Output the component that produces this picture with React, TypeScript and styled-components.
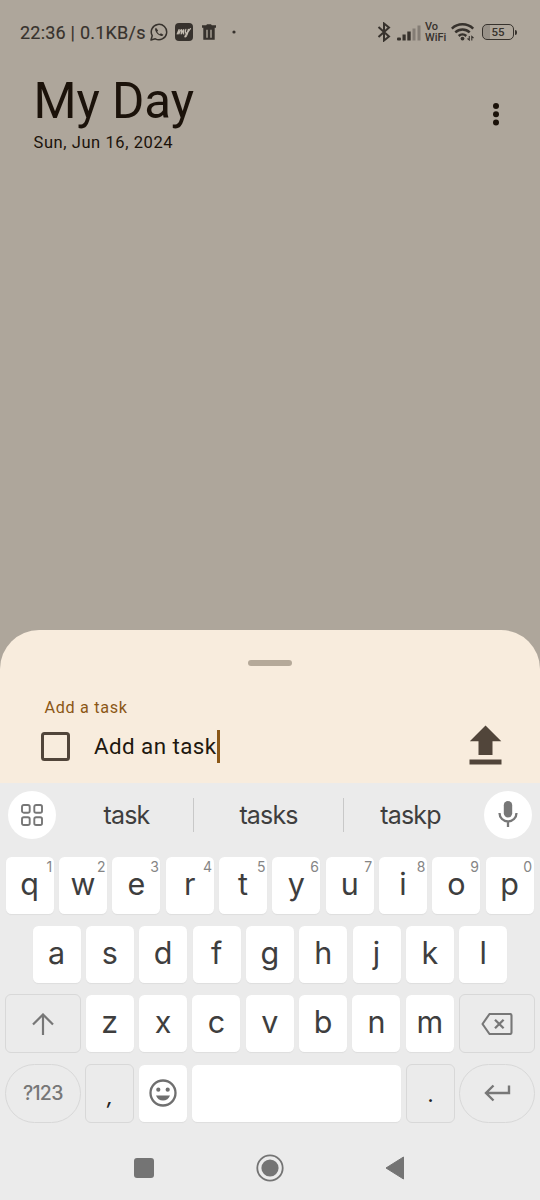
import React from "react";
import styled, { createGlobalStyle } from "styled-components";

const GlobalStyle = createGlobalStyle`
  *, *::before, *::after { box-sizing: border-box; }
  body { margin: 0; background: #aea69b; font-family: Roboto, sans-serif; }
  svg { display: block; flex: none; }
`;

const Screen = styled.div`
  width: 540px;
  height: 1200px;
  display: flex;
  flex-direction: column;
  overflow: hidden;
  background: #aea69b;
`;

const StatusBar = styled.div`
  height: 64px;
  flex: none;
  display: flex;
  align-items: center;
  justify-content: space-between;
  padding: 0 23px 0 20px;
  color: #37322d;
`;

const StatusGroup = styled.div`
  display: flex;
  align-items: center;
`;

const StatusText = styled.span`
  width: 130px;
  font-size: 18px;
  line-height: 24px;
  letter-spacing: 0.22px;
  white-space: nowrap;
  padding-top: 2px;
  -webkit-text-stroke: 0.15px currentColor;
`;

const VoWifi = styled.span`
  width: 26px;
  margin-left: 4px;
  padding-top: 1px;
  font-size: 11px;
  font-weight: 500;
  line-height: 10.5px;
  white-space: pre;
`;

const Header = styled.header`
  flex: none;
  display: flex;
  justify-content: space-between;
  align-items: flex-start;
  padding: 7px 36px 0 33.5px;
  color: #1b120a;
`;

const Title = styled.h1`
  margin: 0;
  font-size: 49.3px;
  font-weight: 400;
  line-height: 60px;
  letter-spacing: -0.05px;
`;

const DateText = styled.p`
  margin: 1.5px 0 0;
  font-size: 16.5px;
  line-height: 20px;
  letter-spacing: 0.58px;
`;

const MenuButton = styled.button`
  border: 0;
  padding: 0;
  margin-top: 30px;
  background: none;
  color: inherit;
`;

const Sheet = styled.section`
  flex: none;
  margin-top: auto;
  height: 153px;
  border-radius: 39px 39px 0 0;
  background: #f8ecdd;
  display: flex;
  flex-direction: column;
`;

const Handle = styled.div`
  width: 44px;
  height: 6px;
  margin: 30px auto 0;
  border-radius: 3px;
  background: #b5a999;
`;

const FieldLabel = styled.label`
  margin: 32px 0 0 44.5px;
  font-size: 16.2px;
  line-height: 20px;
  letter-spacing: 0.68px;
  color: #8b5716;
`;

const TaskRow = styled.div`
  display: flex;
  align-items: center;
  height: 40px;
  margin-top: 8px;
  padding: 0 38.5px 0 41px;
`;

const Checkbox = styled.span`
  width: 29px;
  height: 29px;
  border: 3px solid #51453a;
  border-radius: 3.5px;
`;

const TaskInput = styled.span`
  flex: 1;
  display: flex;
  align-items: center;
  margin-left: 24px;
  font-size: 22.4px;
  letter-spacing: 0.42px;
  color: #21180f;
  white-space: nowrap;
`;

const Caret = styled.span`
  width: 3px;
  height: 33px;
  background: #8b5716;
`;

const UploadSlot = styled.span`
  padding-bottom: 2px;
`;

const Keyboard = styled.section`
  flex: none;
  height: 417px;
  display: flex;
  flex-direction: column;
  background: #ebebeb;
  color: #3e3e3e;
  font-family: Inter, sans-serif;
`;

const Suggestions = styled.div`
  height: 63px;
  display: flex;
  align-items: center;
  padding: 0 8px;
`;

const RoundButton = styled.span`
  width: 48px;
  height: 48px;
  flex: none;
  border-radius: 50%;
  background: #fff;
  color: #777;
  display: grid;
  place-items: center;
`;

const Words = styled.div`
  flex: 1;
  display: grid;
  grid-template-columns: 138px 150px 1fr;
`;

const Word = styled.span<{ $divided?: boolean; $start?: number; $end?: number }>`
  height: 34px;
  line-height: 34px;
  padding-left: ${(p) => p.$start ?? 0}px;
  padding-right: ${(p) => p.$end ?? 0}px;
  text-align: center;
  font-size: 25px;
  letter-spacing: -0.85px;
  border-right: ${(p) => (p.$divided ? "1px solid #c8c8c8" : "0")};
`;

const Keys = styled.div`
  display: flex;
  flex-direction: column;
  gap: 11.3px;
  padding-top: 10.3px;
`;

const KeyRow = styled.div<{ $inset?: number }>`
  height: 58px;
  display: flex;
  align-items: center;
  gap: 5.35px;
  padding: 0 ${(p) => p.$inset ?? 5.6}px;
`;

const Key = styled.span<{ $grow?: boolean }>`
  width: 48px;
  height: 57px;
  flex: ${(p) => (p.$grow ? "1" : "none")};
  border-radius: 5.5px;
  background: #fff;
  box-shadow: 0 1px 1px #dedede;
  display: grid;
  grid-template: 100% / 100%;
  color: #3e3e3e;
`;

const Letter = styled.span`
  grid-area: 1 / 1;
  text-align: center;
  font-size: 30.5px;
  line-height: 53px;
`;

const Hint = styled.span`
  grid-area: 1 / 1;
  justify-self: end;
  padding: 1px 1.5px 0 0;
  font-size: 14px;
  line-height: 17px;
  color: #858585;
`;

const EmojiSlot = styled.span`
  display: grid;
  place-items: center;
  color: #6f6f6f;
`;

const ActionKey = styled.span<{ $wide?: boolean; $pill?: boolean }>`
  width: ${(p) => (p.$wide ? 76 : 49)}px;
  height: 59px;
  flex: none;
  margin: 0 ${(p) => (p.$wide ? -0.4 : -0.5)}px;
  border: 1px solid #d8d8d8;
  border-radius: ${(p) => (p.$pill ? 30 : 6)}px;
  display: flex;
  align-items: center;
  justify-content: center;
  color: #777;
  font-size: 19.5px;
  font-weight: 500;
  letter-spacing: -0.7px;
`;

const Punctuation = styled.span<{ $slanted?: boolean }>`
  color: #222;
  font-size: 20px;
  font-style: ${(p) => (p.$slanted ? "italic" : "normal")};
  padding-top: ${(p) => (p.$slanted ? 7 : 3)}px;
`;

const NavBar = styled.nav`
  display: flex;
  justify-content: space-between;
  align-items: center;
  margin-top: auto;
  height: 65px;
  padding: 0 135px 0 133px;
  color: #747474;
`;

const WhatsAppIcon = () => (
  <svg width="18" height="18" viewBox="0 0 18 18" fill="none" stroke="currentColor" strokeWidth="1.5">
    <path d="M1 17l1.2-4.3A7.7 7.7 0 1 1 5.3 15.8Z" strokeLinejoin="round" />
    <path d="M6 4.800c-1 .6-1.100 1.700-.6 2.900 1 2.400 3 4.300 5.300 5.100 1.200.4 2.300.1 2.700-1l-2.500-1.600-1.100 1c-1.200-.5-2-1.400-2.600-2.500l.9-1.100Z" fill="currentColor" stroke="none" />
  </svg>
);

const MyAppIcon = () => (
  <svg width="18" height="18" viewBox="0 0 18 18">
    <rect width="18" height="18" rx="4" fill="currentColor" />
    <path d="M2.200 11 4.200 6.200l-.5 5C4.700 9 5.700 6.500 6.400 6.500s-.6 4.500-.1 4.500 1.600-4.300 2.300-4.300-.8 4.200.2 4.200M10.800 6.300c-.7 2.600-.6 3.900.2 3.900s1.900-1.900 2.500-4.200c-.6 3.700-1.900 8-3.200 8-1.500 0 1.400-3.300 5.200-8.300" fill="none" stroke="#c4bcb1" strokeWidth="1.200" strokeLinecap="round" />
  </svg>
);

const TrashIcon = () => (
  <svg width="14" height="17" viewBox="0 0 14 17">
    <path fill="currentColor" fillRule="evenodd" d="M4.200 1.300 5 .3h4l.8 1H14V3.800h-1.300v12H1.300v-12H0V1.300ZM4.300 5.800v8h1.400v-8Zm4 0v8h1.400v-8Z" />
  </svg>
);

const BluetoothIcon = () => (
  <svg width="14" height="20" viewBox="0 0 14 20" fill="none" stroke="currentColor" strokeWidth="2">
    <path d="M1.500 5 12 14.500 7 18.500v-17L12 5.500 1.500 15" />
  </svg>
);

const SignalIcon = () => (
  <svg width="24" height="16" viewBox="0 0 24 16" fill="currentColor">
    <rect y="12.500" width="4" height="3" rx="1" />
    <rect x="5.500" y="9.500" width="3.200" height="6" />
    <rect x="10.300" y="6.500" width="3.400" height="9" />
    <rect x="15.500" y="3.500" width="3" height="12" opacity=".35" />
    <rect x="20.500" y=".5" width="3" height="15" opacity=".35" />
  </svg>
);

const WifiIcon = () => (
  <svg width="24" height="18" viewBox="0 0 24 18" fill="none" stroke="currentColor" strokeWidth="2.500">
    <path d="M.8 5.600a15.500 15.500 0 0 1 21.400 0M4.300 9.400a10.500 10.500 0 0 1 14.400 0M7.700 13a5.600 5.600 0 0 1 7.600 0" />
    <circle cx="11.500" cy="15.600" r="1.900" fill="currentColor" stroke="none" />
    <path d="M18.300 13v4l-1.800-1.500M20.800 17.500v-4l1.700 1.500" strokeWidth="1.100" />
  </svg>
);

const BatteryWrap = styled.span`
  display: flex;
  align-items: center;
  margin-left: 7px;
`;

const BatteryBody = styled.span`
  width: 32px;
  height: 16px;
  border: 1.5px solid currentColor;
  border-radius: 5px;
  background: linear-gradient(90deg, #989188 0 7px, transparent 7px);
  font-size: 11.5px;
  font-weight: 500;
  line-height: 14.5px;
  text-align: center;
`;

const BatteryTip = styled.span`
  width: 2px;
  height: 5px;
  margin-left: 1px;
  border-radius: 0 2px 2px 0;
  background: currentColor;
`;

const IconSlot = styled.span<{ $left: number; $top?: number }>`
  margin-left: ${(p) => p.$left}px;
  padding-top: ${(p) => p.$top ?? 0}px;
`;

const topRow = "qwertyuiop".split("");
const middleRow = "asdfghjkl".split("");
const bottomRow = "zxcvbnm".split("");

export default function App() {
  return (
    <>
      <GlobalStyle />
      <Screen>
        <StatusBar>
          <StatusGroup>
            <StatusText>22:36 | 0.1KB/s</StatusText>
            <WhatsAppIcon />
            <IconSlot $left={7}><MyAppIcon /></IconSlot>
            <IconSlot $left={8.5}><TrashIcon /></IconSlot>
            <IconSlot $left={16}>
              <svg width="4" height="4" viewBox="0 0 4 4"><circle cx="2" cy="2" r="1.600" fill="currentColor" /></svg>
            </IconSlot>
          </StatusGroup>
          <StatusGroup>
            <BluetoothIcon />
            <IconSlot $left={6} $top={1}><SignalIcon /></IconSlot>
            <VoWifi>{"Vo\nWiFi"}</VoWifi>
            <WifiIcon />
            <BatteryWrap>
              <BatteryBody>55</BatteryBody>
              <BatteryTip />
            </BatteryWrap>
          </StatusGroup>
        </StatusBar>

        <Header>
          <div>
            <Title>My Day</Title>
            <DateText>Sun, Jun 16, 2024</DateText>
          </div>
          <MenuButton aria-label="More options">
            <svg width="16" height="26" viewBox="0 0 16 26" fill="currentColor">
              <circle cx="8" cy="5" r="3" />
              <circle cx="8" cy="13.300" r="3" />
              <circle cx="8" cy="21.600" r="3" />
            </svg>
          </MenuButton>
        </Header>

        <Sheet>
          <Handle />
          <FieldLabel>Add a task</FieldLabel>
          <TaskRow>
            <Checkbox />
            <TaskInput>Add an task<Caret /></TaskInput>
            <UploadSlot>
              <svg width="33" height="40" viewBox="0 0 33 40" fill="#51453a">
                <path d="M16.500 .5 32.300 16.300H23.500V30H9.500V16.300H.8ZM.5 34.500h32v5H.5Z" />
              </svg>
            </UploadSlot>
          </TaskRow>
        </Sheet>

        <Keyboard>
          <Suggestions>
            <RoundButton>
              <svg width="22" height="22" viewBox="0 0 22 22" fill="none" stroke="currentColor" strokeWidth="1.900">
                <rect x="1" y="1" width="7.700" height="7.700" rx="1.800" />
                <rect x="13.300" y="1" width="7.700" height="7.700" rx="1.800" />
                <rect x="1" y="13.300" width="7.700" height="7.700" rx="1.800" />
                <rect x="13.300" y="13.300" width="7.700" height="7.700" rx="1.800" />
              </svg>
            </RoundButton>
            <Words>
              <Word $divided $start={4}>task</Word>
              <Word $divided>tasks</Word>
              <Word $end={7}>taskp</Word>
            </Words>
            <RoundButton>
              <svg width="20" height="28" viewBox="0 0 20 28">
                <rect x="5.800" y="0" width="8.400" height="16.500" rx="4.200" fill="currentColor" />
                <path d="M1.500 12a8.500 8.500 0 0 0 17 0M10 20.500V26" fill="none" stroke="currentColor" strokeWidth="2.300" />
              </svg>
            </RoundButton>
          </Suggestions>

          <Keys>
            <KeyRow>
              {topRow.map((letter, i) => (
                <Key key={letter}>
                  <Letter>{letter}</Letter>
                  <Hint>{(i + 1) % 10}</Hint>
                </Key>
              ))}
            </KeyRow>
            <KeyRow $inset={32.5}>
              {middleRow.map((letter) => (
                <Key key={letter}><Letter>{letter}</Letter></Key>
              ))}
            </KeyRow>
            <KeyRow $inset={5.2}>
              <ActionKey $wide>
                <svg width="22" height="22" viewBox="0 0 22 22" fill="none" stroke="currentColor" strokeWidth="2.200">
                  <path d="M11 22V1.800M1 11.500l10-10 10 10" />
                </svg>
              </ActionKey>
              {bottomRow.map((letter) => (
                <Key key={letter}><Letter>{letter}</Letter></Key>
              ))}
              <ActionKey $wide>
                <svg width="32" height="22" viewBox="0 0 32 22" fill="none" stroke="currentColor" strokeWidth="2.100">
                  <path d="M8.500 1H29a1.500 1.500 0 0 1 1.500 1.500v17A1.500 1.500 0 0 1 29 21H8.500L1.500 11Z" strokeLinejoin="round" />
                  <path d="m14 6.700 8.600 8.600m0-8.600L14 15.300" strokeWidth="2.300" />
                </svg>
              </ActionKey>
            </KeyRow>
            <KeyRow $inset={5.2}>
              <ActionKey $wide $pill>?123</ActionKey>
              <ActionKey><Punctuation $slanted>,</Punctuation></ActionKey>
              <Key>
                <EmojiSlot>
                  <svg width="28" height="28" viewBox="0 0 28 28">
                    <circle cx="14" cy="14" r="12.500" fill="none" stroke="currentColor" strokeWidth="2.300" />
                    <circle cx="9.300" cy="10.700" r="2.100" fill="currentColor" />
                    <circle cx="18.700" cy="10.700" r="2.100" fill="currentColor" />
                    <path d="M7 16.500h14c-1 3-3.700 5-7 5s-6-2-7-5Z" fill="currentColor" />
                  </svg>
                </EmojiSlot>
              </Key>
              <Key $grow />
              <ActionKey><Punctuation>.</Punctuation></ActionKey>
              <ActionKey $wide $pill>
                <svg width="27" height="18" viewBox="0 0 27 18" fill="none" stroke="currentColor" strokeWidth="2.400">
                  <path d="M25 1.500V9H2M9.500 1.500 2 9l7.500 7.500" />
                </svg>
              </ActionKey>
            </KeyRow>
          </Keys>

          <NavBar>
            <svg width="22" height="22" viewBox="0 0 22 22"><rect x="1" y="1" width="20" height="20" rx="3" fill="currentColor" /></svg>
            <svg width="28" height="28" viewBox="0 0 28 28">
              <circle cx="14" cy="14" r="12.700" fill="none" stroke="currentColor" strokeWidth="1.800" />
              <circle cx="14" cy="14" r="8.600" fill="currentColor" />
            </svg>
            <svg width="20" height="24" viewBox="0 0 20 24"><path d="M1 12 18.500 1v22Z" fill="currentColor" stroke="currentColor" strokeLinejoin="round" /></svg>
          </NavBar>
        </Keyboard>
      </Screen>
    </>
  );
}
